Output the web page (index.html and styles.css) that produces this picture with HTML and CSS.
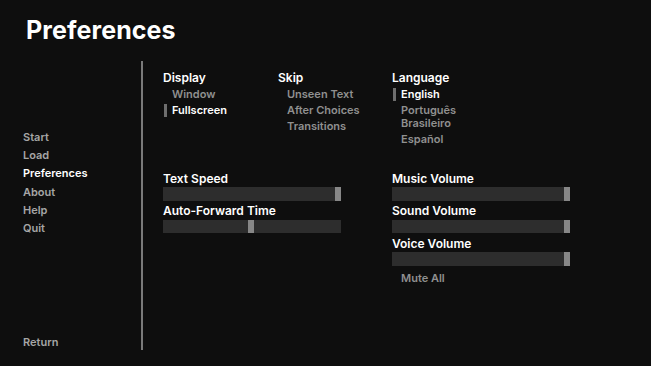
FILE: index.html
```html
<!DOCTYPE html>
<html lang="en">
<head>
    <meta charset="UTF-8">
    <meta name="viewport" content="width=device-width, initial-scale=1.0">
    <title>Preferences</title>
    <link rel="stylesheet" href="styles.css">
</head>
<body>

<div class="screen">
    <h1 class="title">Preferences</h1>

    <div class="main">
        <nav class="nav">
            <div class="nav-items">
                <a class="nav-item">Start</a>
                <a class="nav-item">Load</a>
                <a class="nav-item active">Preferences</a>
                <a class="nav-item">About</a>
                <a class="nav-item">Help</a>
                <a class="nav-item">Quit</a>
            </div>
            <a class="nav-item return">Return</a>
        </nav>

        <div class="divider"></div>

        <div class="content">
            <div class="choices">
                <div class="group">
                    <div class="label">Display</div>
                    <a class="option">Window</a>
                    <a class="option selected">Fullscreen</a>
                </div>
                <div class="group">
                    <div class="label">Skip</div>
                    <a class="option">Unseen Text</a>
                    <a class="option">After Choices</a>
                    <a class="option">Transitions</a>
                </div>
                <div class="group language">
                    <div class="label">Language</div>
                    <a class="option selected">English</a>
                    <a class="option">Português Brasileiro</a>
                    <a class="option">Español</a>
                </div>
            </div>

            <div class="sliders">
                <div class="slider-col">
                    <div class="label">Text Speed</div>
                    <div class="bar"><div class="fill" style="width: 96.6%"></div><div class="thumb"></div></div>
                    <div class="label">Auto-Forward Time</div>
                    <div class="bar"><div class="fill" style="width: 47.8%"></div><div class="thumb"></div></div>
                </div>
                <div class="slider-col">
                    <div class="label">Music Volume</div>
                    <div class="bar"><div class="fill" style="width: 96.6%"></div><div class="thumb"></div></div>
                    <div class="label">Sound Volume</div>
                    <div class="bar"><div class="fill" style="width: 96.6%"></div><div class="thumb"></div></div>
                    <div class="label">Voice Volume</div>
                    <div class="bar"><div class="fill" style="width: 96.6%"></div><div class="thumb"></div></div>
                    <a class="option mute">Mute All</a>
                </div>
            </div>
        </div>
    </div>
</div>

</body>
</html>
```

FILE: styles.css
```css
body {
    margin: 0;
    background-color: #0e0e0e;
    font-family: Inter, "Liberation Sans", sans-serif;
    color: #ffffff;
}
.screen {
    width: 651px;
    height: 366px;
    overflow: hidden;
}
.title {
    margin: 0;
    padding: 14px 0 0 26px;
    height: 47px;
    font-size: 25px;
    line-height: 32px;
    font-weight: 700;
    letter-spacing: 0.1px;
}
.main {
    display: flex;
    height: 290px;
}
.nav {
    width: 118px;
    padding: 67px 0 0 23px;
    display: flex;
    flex-direction: column;
}
.nav-items {
    display: flex;
    flex-direction: column;
}
.nav-item {
    font-size: 11px;
    line-height: 18.2px;
    font-weight: 600;
    color: #a6a6a6;
}
.nav-item.active {
    color: #ffffff;
}
.nav-item.return {
    margin-top: auto;
}
.divider {
    width: 2px;
    height: 289px;
    background-color: #7a7a7a;
}
.content {
    padding: 9px 0 0 20px;
}
.choices {
    display: grid;
    grid-template-columns: 115px 114px 120px;
}
.group {
    display: flex;
    flex-direction: column;
    align-items: flex-start;
}
.label {
    font-size: 12px;
    line-height: 16.5px;
    font-weight: 600;
    color: #ffffff;
}
.option {
    margin: 1.5px 0 1.5px 1px;
    padding-left: 5px;
    border-left: 3px solid transparent;
    font-size: 11px;
    line-height: 13px;
    font-weight: 600;
    color: #909090;
}
.option.selected {
    border-left-color: #6e6e6e;
    color: #ffffff;
}
.language .option {
    max-width: 75px;
}
.sliders {
    display: grid;
    grid-template-columns: 229px 178px;
    margin-top: 23px;
}
.slider-col {
    display: flex;
    flex-direction: column;
    align-items: flex-start;
}
.bar {
    display: flex;
    width: 178px;
    height: 13.5px;
    margin-bottom: 2.5px;
    background-color: #2d2d2d;
}
.thumb {
    width: 6px;
    background-color: #878787;
}
.mute {
    margin-top: 4px;
}
```
